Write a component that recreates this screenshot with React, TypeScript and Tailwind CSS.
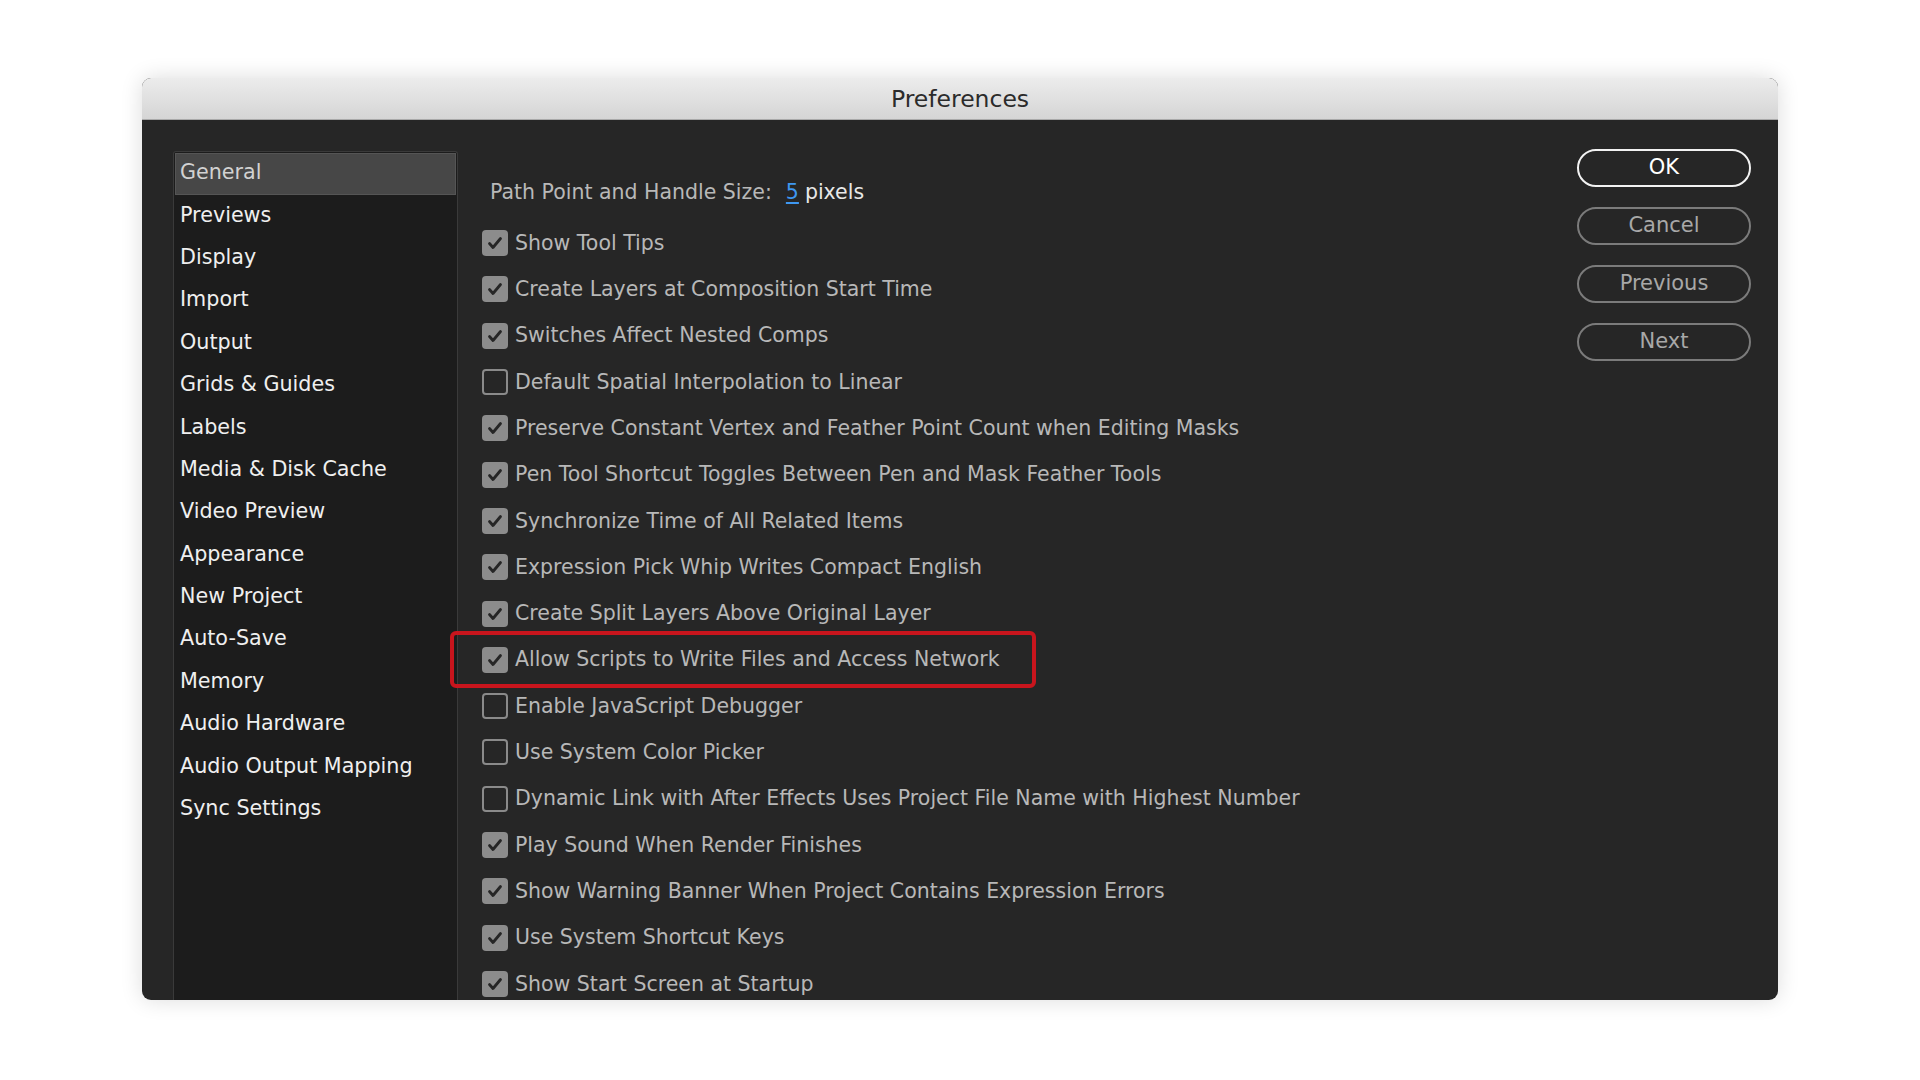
import React from "react";

const sections = [
  "General",
  "Previews",
  "Display",
  "Import",
  "Output",
  "Grids & Guides",
  "Labels",
  "Media & Disk Cache",
  "Video Preview",
  "Appearance",
  "New Project",
  "Auto-Save",
  "Memory",
  "Audio Hardware",
  "Audio Output Mapping",
  "Sync Settings",
];

const options: { label: string; checked: boolean; highlight?: boolean }[] = [
  { label: "Show Tool Tips", checked: true },
  { label: "Create Layers at Composition Start Time", checked: true },
  { label: "Switches Affect Nested Comps", checked: true },
  { label: "Default Spatial Interpolation to Linear", checked: false },
  { label: "Preserve Constant Vertex and Feather Point Count when Editing Masks", checked: true },
  { label: "Pen Tool Shortcut Toggles Between Pen and Mask Feather Tools", checked: true },
  { label: "Synchronize Time of All Related Items", checked: true },
  { label: "Expression Pick Whip Writes Compact English", checked: true },
  { label: "Create Split Layers Above Original Layer", checked: true },
  { label: "Allow Scripts to Write Files and Access Network", checked: true, highlight: true },
  { label: "Enable JavaScript Debugger", checked: false },
  { label: "Use System Color Picker", checked: false },
  { label: "Dynamic Link with After Effects Uses Project File Name with Highest Number", checked: false },
  { label: "Play Sound When Render Finishes", checked: true },
  { label: "Show Warning Banner When Project Contains Expression Errors", checked: true },
  { label: "Use System Shortcut Keys", checked: true },
  { label: "Show Start Screen at Startup", checked: true },
];

function Checkbox({ checked }: { checked: boolean }) {
  if (!checked) {
    return <div className="w-[26px] h-[26px] rounded-[4px] border-2 border-[#8a8a8a] shrink-0" />;
  }
  return (
    <div className="w-[26px] h-[26px] rounded-[4px] bg-[#8c8c8c] shrink-0 flex items-center justify-center">
      <svg width="26" height="26" viewBox="0 0 26 26">
        <path d="M7.5 13.5 L11 17.5 L18.5 8.5" fill="none" stroke="#262626" strokeWidth="2.8" strokeLinecap="round" strokeLinejoin="round" />
      </svg>
    </div>
  );
}

export default function App() {
  return (
    <div
      className="min-h-screen w-full bg-white pt-[78px] pl-[142px]"
      style={{ fontFamily: '"DejaVu Sans", "Noto Sans", sans-serif' }}
    >
      <div className="w-[1636px] h-[922px] rounded-[9px] overflow-hidden bg-[#262626] flex flex-col shadow-[0_0_22px_rgba(0,0,0,0.14)]">
        {/* title bar */}
        <div className="h-[42px] shrink-0 pt-[3px] bg-gradient-to-b from-[#ececec] to-[#d5d5d5] border-b border-[#a9a9a9] flex items-center justify-center">
          <span className="text-[23.5px] text-[#2b2b2b]">Preferences</span>
        </div>

        <div className="flex flex-1 pl-[31px] pr-[27px] min-h-0">
          {/* sidebar */}
          <div className="mt-[31px] w-[285px] shrink-0 bg-[#1c1c1c] border border-b-0 border-[#3a3a3a] rounded-t-[3px] pt-px px-px">
            {sections.map((s, i) => (
              <div
                key={s}
                className={
                  i === 0
                    ? "h-[42.4px] flex items-center pl-[4px] pb-[3px] bg-[#474747] border border-[#555] text-[#d2d2d2] text-[20.7px]"
                    : "h-[42.4px] flex items-center pl-[5px] pb-[3px] text-[#efefef] text-[20.7px]"
                }
              >
                {s}
              </div>
            ))}
          </div>

          {/* options */}
          <div className="flex-1 pl-[24px] pt-[49px] text-[20.5px] text-[#b8b8b8]">
            <div className="h-[46px] flex items-center pl-[8px]">
              <span>Path Point and Handle Size:</span>
              <span className="ml-[14px] text-[#3e97f0] underline underline-offset-[3px] decoration-2">5</span>
              <span className="ml-[6px] text-[#e8e8e8]">pixels</span>
            </div>
            <div className="mt-[5px]">
              {options.map((o) => (
                <div key={o.label} className="relative h-[46.3px] flex items-center gap-[7px]">
                  <Checkbox checked={o.checked} />
                  <span>{o.label}</span>
                  {o.highlight && (
                    <div className="absolute left-[-32px] top-[-5.5px] w-[586px] h-[57px] border-[4px] border-[#c8151d] rounded-[6px] pointer-events-none" />
                  )}
                </div>
              ))}
            </div>
          </div>

          {/* buttons */}
          <div className="w-[174px] shrink-0 pt-[29px] flex flex-col gap-[20px]">
            <button className="h-[38px] rounded-full border-2 border-[#f2f2f2] text-white text-[21px]">OK</button>
            <button className="h-[38px] rounded-full border-2 border-[#7b7b7b] text-[#a8a8a8] text-[21px]">Cancel</button>
            <button className="h-[38px] rounded-full border-2 border-[#7b7b7b] text-[#a8a8a8] text-[21px]">Previous</button>
            <button className="h-[38px] rounded-full border-2 border-[#7b7b7b] text-[#a8a8a8] text-[21px]">Next</button>
          </div>
        </div>
      </div>
    </div>
  );
}
